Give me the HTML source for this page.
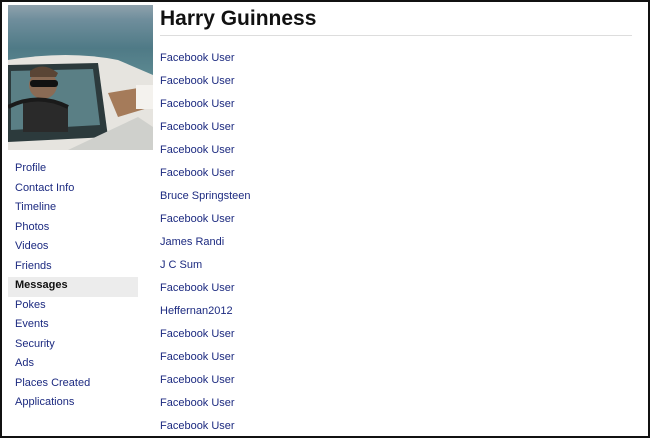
<!DOCTYPE html>
<html><head><style>
body{margin:0;width:650px;height:438px;overflow:hidden;background:#fff;font-family:"Liberation Sans",Arial,sans-serif;}
.frame{position:absolute;left:0;top:0;width:646px;height:434px;border:2px solid #111;}
.photo{position:absolute;left:8px;top:5px;width:145px;height:145px;overflow:hidden;
background:linear-gradient(#8fa2ad 0%,#6f8e9c 10%,#4f7a86 30%,#5d8a92 50%,#c9b18a 60%,#d8d2c8 70%,#e3e1dc 100%);}
h1{position:absolute;left:160px;top:7px;margin:0;font-size:21px;font-weight:bold;color:#111;}
.hr{position:absolute;left:160px;top:35px;width:472px;height:1px;background:#ddd;}
.list{position:absolute;left:160px;top:51px;font-size:11px;color:#1c2a80;}
.list div{height:23px;line-height:14px;}
.side{position:absolute;left:8px;top:160px;width:130px;font-size:11px;color:#1c2a80;}
.side div{height:19.5px;line-height:16px;padding-left:7px;}
.side .act{background:#ececec;color:#111;font-weight:bold;}
</style></head><body>
<div class="frame"></div>
<div class="photo">
<svg width="145" height="145" viewBox="0 0 145 145">
<path d="M0 55 Q60 45 110 55 L145 70 L145 145 L0 145Z" fill="#e6e4df"/>
<path d="M0 60 L90 58 L100 132 L0 137Z" fill="#2c3a3c"/>
<path d="M3 66 L85 64 L92 120 L3 125Z" fill="#5a7f85"/>
<circle cx="35" cy="80" r="14" fill="#8a6b55"/>
<path d="M22 66 Q35 56 50 68 L48 72 L22 72Z" fill="#5a4535"/>
<rect x="22" y="75" width="28" height="7" rx="3" fill="#111"/>
<path d="M15 97 Q35 90 60 100 L60 127 L15 127Z" fill="#2a2a2a"/>
<path d="M0 102 Q30 87 60 102" stroke="#1a1a1a" stroke-width="4" fill="none"/>
<path d="M100 88 L130 83 L140 103 L110 112Z" fill="#a57b5a"/>
<rect x="128" y="80" width="17" height="24" fill="#f4f2ee"/>
<path d="M60 145 L130 112 L145 122 L145 145Z" fill="#cfd0cc"/>
</svg></div>
<h1>Harry Guinness</h1>
<div class="hr"></div>
<div class="list">
<div>Facebook User</div><div>Facebook User</div><div>Facebook User</div><div>Facebook User</div><div>Facebook User</div><div>Facebook User</div><div>Bruce Springsteen</div><div>Facebook User</div><div>James Randi</div><div>J C Sum</div><div>Facebook User</div><div>Heffernan2012</div><div>Facebook User</div><div>Facebook User</div><div>Facebook User</div><div>Facebook User</div><div>Facebook User</div>
</div>
<div class="side">
<div>Profile</div><div>Contact Info</div><div>Timeline</div><div>Photos</div><div>Videos</div><div>Friends</div><div class="act">Messages</div><div>Pokes</div><div>Events</div><div>Security</div><div>Ads</div><div>Places Created</div><div>Applications</div>
</div>
</body></html>
